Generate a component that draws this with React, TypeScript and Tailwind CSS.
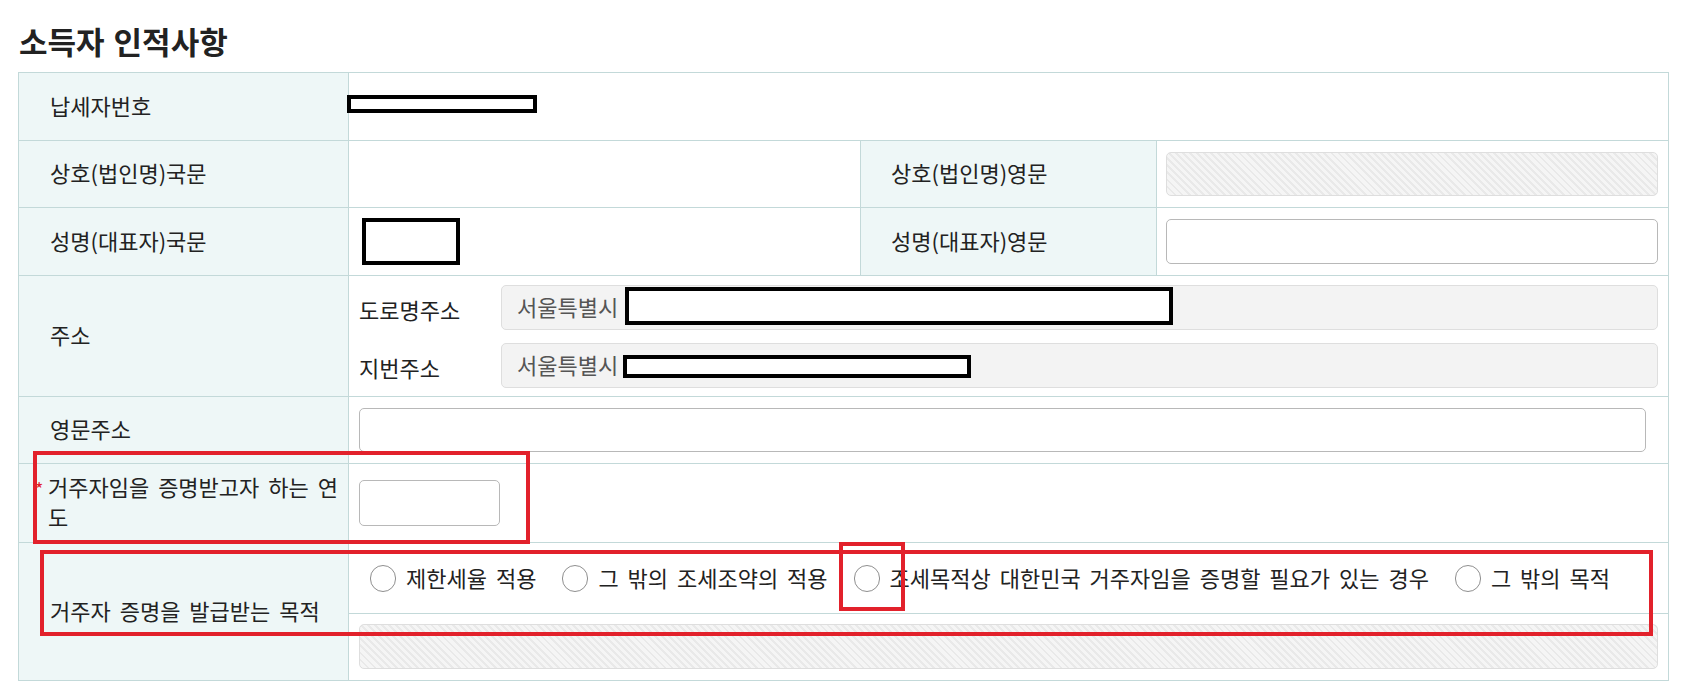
import React from 'react';

const hatch =
  'bg-[repeating-linear-gradient(45deg,#e9e9e9_0px,#e9e9e9_2px,#f5f5f5_2px,#f5f5f5_5px)]';

function Label({
  children,
  wide = true,
}: {
  children: React.ReactNode;
  wide?: boolean;
}) {
  return (
    <div
      className={`relative flex shrink-0 items-center border-r border-[#c3d9d9] bg-[#eef7f7] pb-[4px] text-[#222] ${
        wide ? 'w-[330px] pl-[31px]' : 'w-[296px] pl-[30px]'
      }`}
    >
      {children}
    </div>
  );
}

function Radio({ label }: { label: string }) {
  return (
    <label className="flex items-center gap-[10px]">
      <span className="h-[27px] w-[26px] shrink-0 rounded-full border border-[#8f8f8f] bg-white" />
      <span className="whitespace-nowrap pb-[3px]">{label}</span>
    </label>
  );
}

function Redact({ className }: { className: string }) {
  return <div className={`pointer-events-none absolute border-[4px] border-black bg-white ${className}`} />;
}

function Annot({ className }: { className: string }) {
  return <div className={`pointer-events-none absolute border-[4px] border-[#e2212b] ${className}`} />;
}

export default function App() {
  return (
    <div className="relative min-h-screen bg-white pl-[18px] pr-[20px] pt-[20px] font-['Noto_Sans_CJK_KR','Noto_Sans',sans-serif] text-[22px] leading-[30px] text-[#222] [word-spacing:4px]">
      <h2 className="mb-[10px] pl-px text-[31px] font-bold leading-[42px] [word-spacing:2px]">소득자 인적사항</h2>

      <div className="border border-[#c3d9d9]">
        {/* 납세자번호 */}
        <div className="flex h-[68px] border-b border-[#c3d9d9]">
          <Label>납세자번호</Label>
          <div className="flex-1" />
        </div>

        {/* 상호 */}
        <div className="flex h-[67px] border-b border-[#c3d9d9]">
          <Label>상호(법인명)국문</Label>
          <div className="w-[512px] shrink-0 border-r border-[#c3d9d9]" />
          <Label wide={false}>상호(법인명)영문</Label>
          <div className="flex flex-1 items-center pl-[9px] pr-[10px]">
            <div className={`h-[44px] w-full rounded-[5px] border border-[#dedede] ${hatch}`} />
          </div>
        </div>

        {/* 성명 */}
        <div className="flex h-[68px] border-b border-[#c3d9d9]">
          <Label>성명(대표자)국문</Label>
          <div className="w-[512px] shrink-0 border-r border-[#c3d9d9]" />
          <Label wide={false}>성명(대표자)영문</Label>
          <div className="flex flex-1 items-center pl-[9px] pr-[10px]">
            <input className="h-[45px] w-full rounded-[5px] border border-[#b8b8b8] bg-white outline-none" />
          </div>
        </div>

        {/* 주소 */}
        <div className="flex h-[121px] border-b border-[#c3d9d9]">
          <Label>주소</Label>
          <div className="flex flex-1 flex-col gap-[13px] pl-[10px] pr-[10px] pt-[9px]">
            <div className="flex items-center">
              <span className="w-[142px] shrink-0 pt-[3px]">도로명주소</span>
              <div className="flex h-[45px] flex-1 items-center rounded-[5px] border border-[#dedede] bg-[#f3f3f3] pb-[3px] pl-[15px] text-[#555]">
                서울특별시
              </div>
            </div>
            <div className="flex items-center">
              <span className="w-[142px] shrink-0 pt-[3px]">지번주소</span>
              <div className="flex h-[45px] flex-1 items-center rounded-[5px] border border-[#dedede] bg-[#f3f3f3] pb-[3px] pl-[15px] text-[#555]">
                서울특별시
              </div>
            </div>
          </div>
        </div>

        {/* 영문주소 */}
        <div className="flex h-[67px] border-b border-[#c3d9d9]">
          <Label>영문주소</Label>
          <div className="flex flex-1 items-center pl-[10px] pr-[22px]">
            <input className="h-[44px] w-full rounded-[5px] border border-[#b8b8b8] bg-white outline-none" />
          </div>
        </div>

        {/* 연도 */}
        <div className="flex h-[79px] border-b border-[#c3d9d9]">
          <div className="relative flex w-[330px] shrink-0 items-center border-r border-[#c3d9d9] bg-[#eef7f7] pb-[4px] pl-[29px]">
            <span className="absolute left-[16px] top-[9px] text-[18px] leading-[30px] text-[#e2212b]">*</span>
            <span className="whitespace-nowrap">
              거주자임을 증명받고자 하는 연
              <br />도
            </span>
          </div>
          <div className="flex flex-1 items-center pl-[10px]">
            <input className="h-[46px] w-[141px] rounded-[5px] border border-[#b8b8b8] bg-white outline-none" />
          </div>
        </div>

        {/* 목적 */}
        <div className="flex h-[137px]">
          <Label>거주자 증명을 발급받는 목적</Label>
          <div className="flex flex-1 flex-col">
            <div className="flex h-[71px] items-center gap-[26px] border-b border-[#c3d9d9] pl-[21px]">
              <Radio label="제한세율 적용" />
              <Radio label="그 밖의 조세조약의 적용" />
              <Radio label="조세목적상 대한민국 거주자임을 증명할 필요가 있는 경우" />
              <Radio label="그 밖의 목적" />
            </div>
            <div className="px-[10px] pt-[10px]">
              <div className={`h-[45px] w-full rounded-[5px] border border-[#dedede] ${hatch}`} />
            </div>
          </div>
        </div>
      </div>

      {/* redactions */}
      <Redact className="left-[347px] top-[95px] h-[18px] w-[190px]" />
      <Redact className="left-[362px] top-[218px] h-[47px] w-[98px]" />
      <Redact className="left-[625px] top-[287px] h-[38px] w-[548px]" />
      <Redact className="left-[623px] top-[355px] h-[23px] w-[348px]" />

      {/* annotation boxes */}
      <Annot className="left-[33px] top-[451px] h-[93px] w-[497px]" />
      <Annot className="left-[40px] top-[550px] h-[86px] w-[1613px]" />
      <Annot className="left-[839px] top-[542px] h-[69px] w-[66px]" />
    </div>
  );
}
